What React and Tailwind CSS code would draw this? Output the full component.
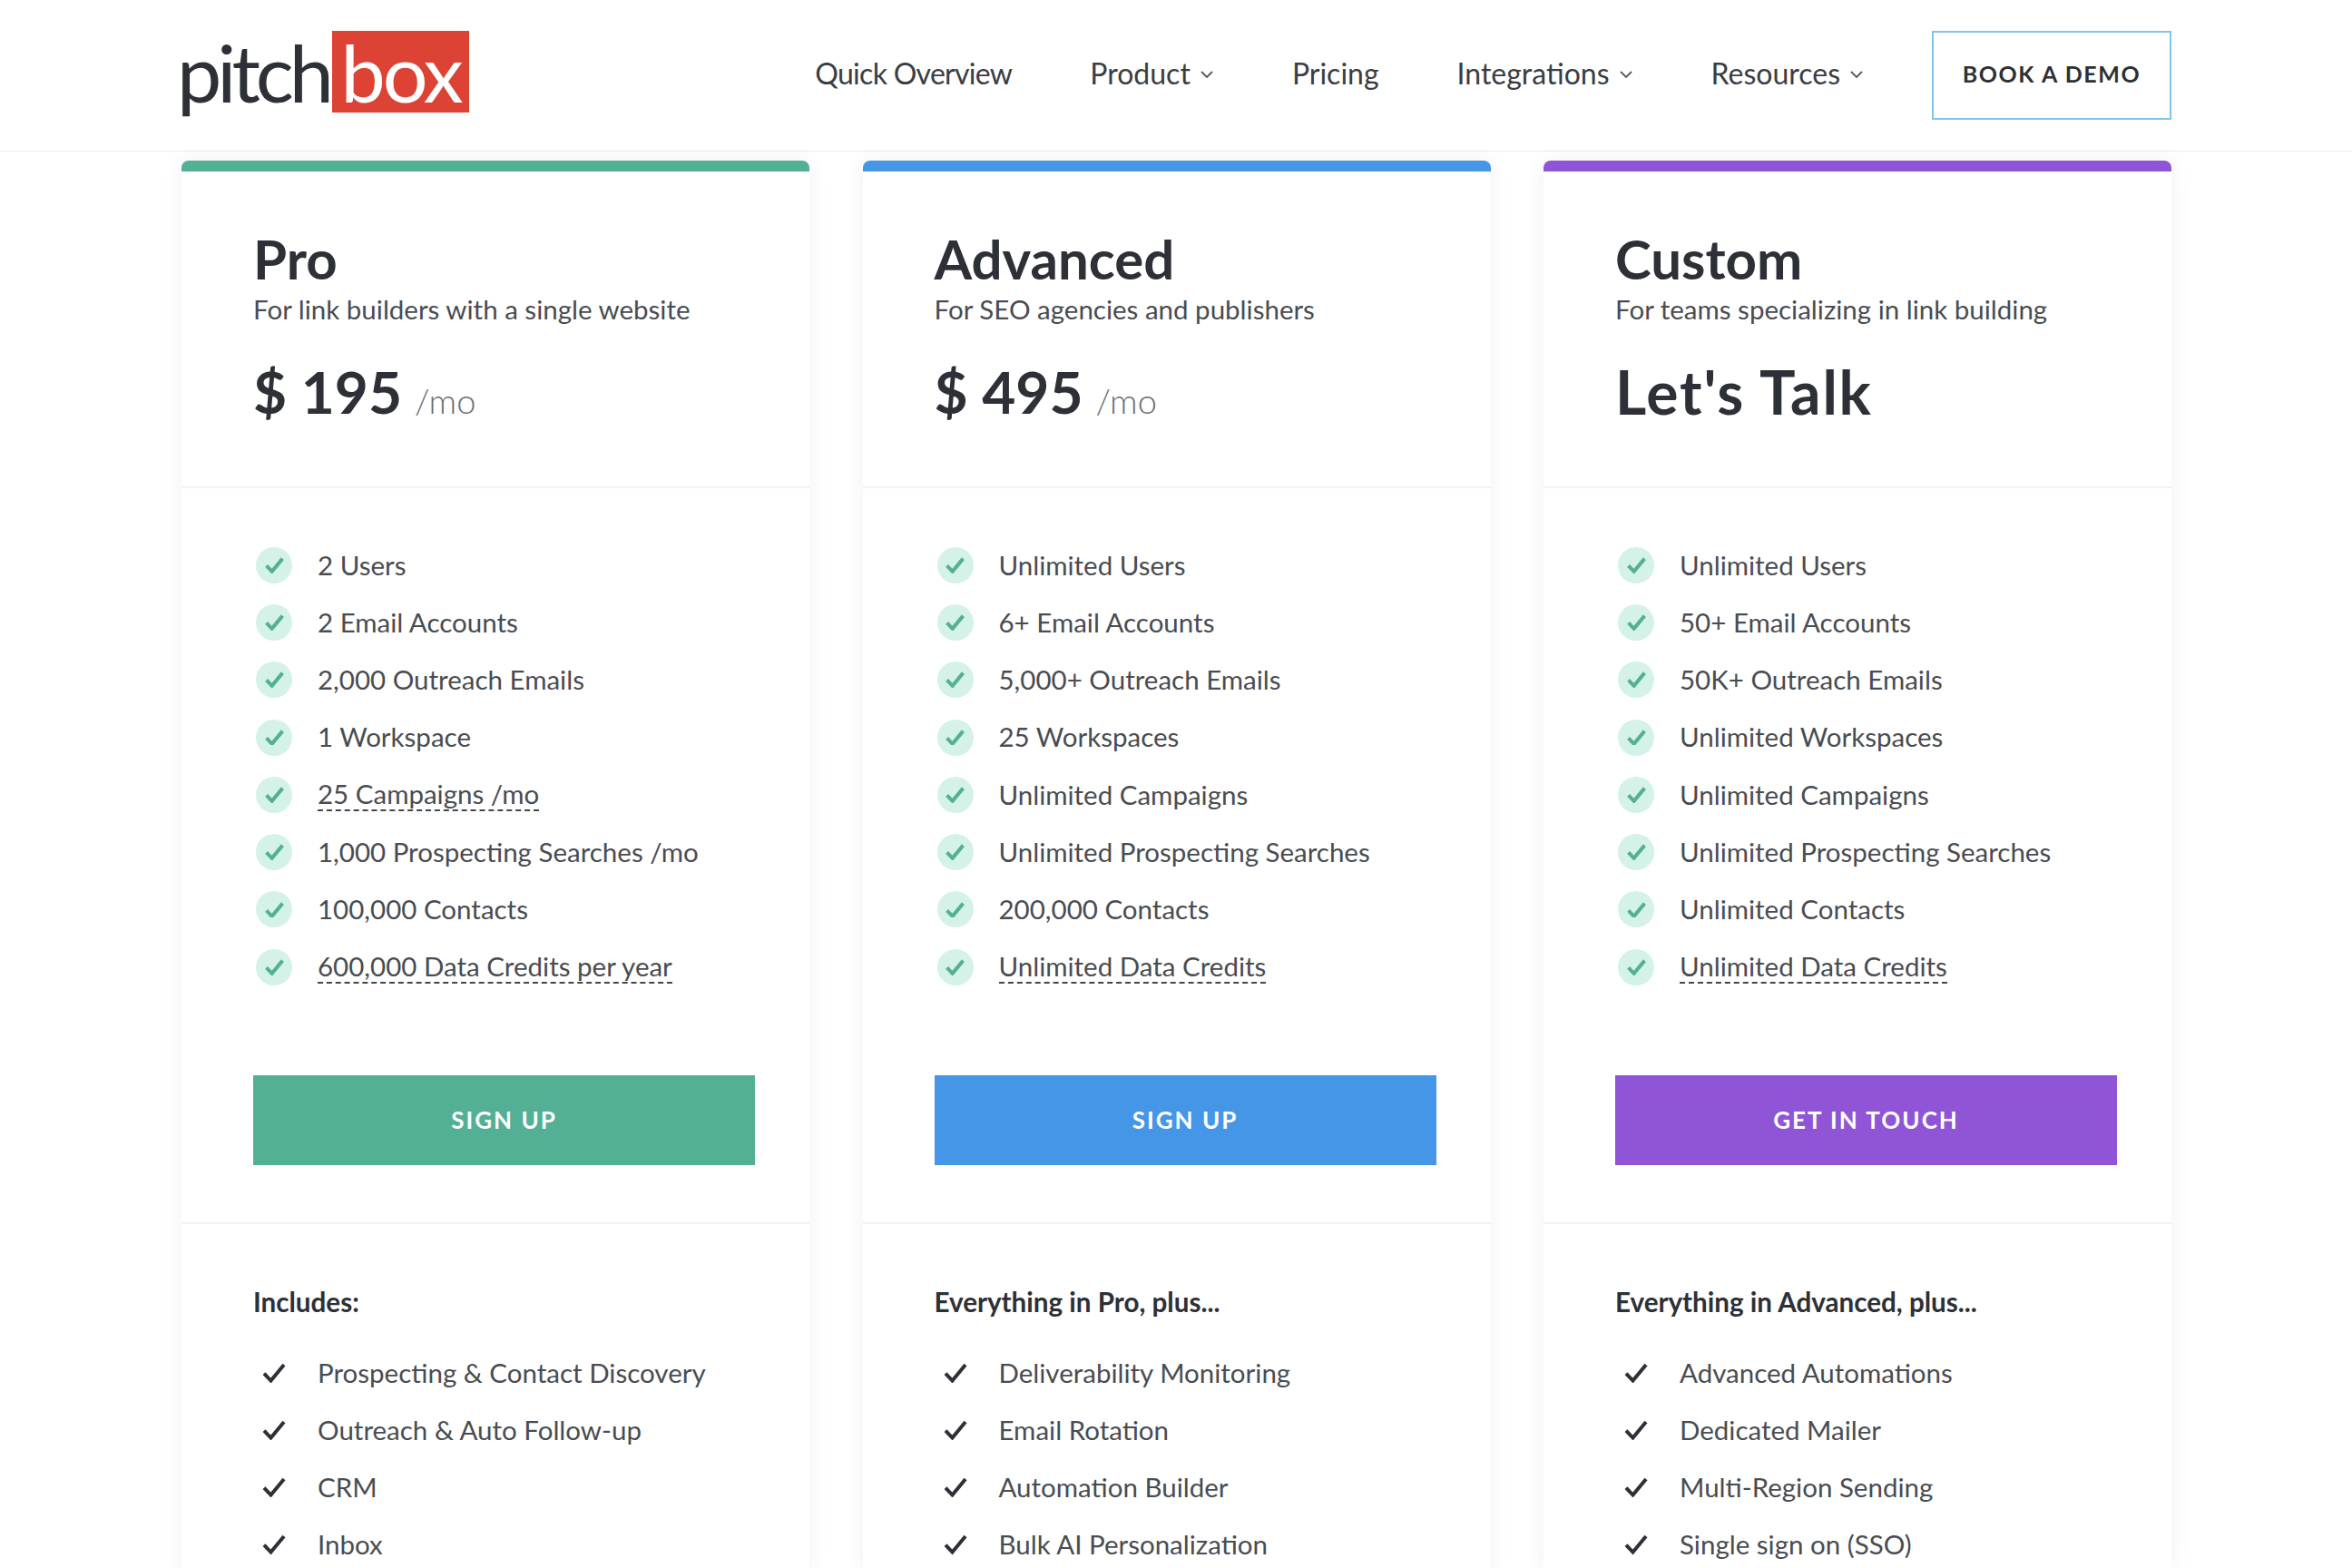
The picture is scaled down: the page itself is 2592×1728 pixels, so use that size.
const plans = [
  {
    name: "Pro",
    desc: "For link builders with a single website",
    price: "$ 195",
    priceStyle: "text-[64px]",
    per: "/mo",
    bar: "bg-[#53b094]",
    cta: "SIGN UP",
    features: [
      ["2 Users"],
      ["2 Email Accounts"],
      ["2,000 Outreach Emails"],
      ["1 Workspace"],
      ["25 Campaigns /mo", true],
      ["1,000 Prospecting Searches /mo"],
      ["100,000 Contacts"],
      ["600,000 Data Credits per year", true],
    ],
    heading: "Includes:",
    extras: ["Prospecting & Contact Discovery", "Outreach & Auto Follow-up", "CRM", "Inbox"],
  },
  {
    name: "Advanced",
    desc: "For SEO agencies and publishers",
    price: "$ 495",
    priceStyle: "text-[64px]",
    per: "/mo",
    bar: "bg-[#4596e6]",
    cta: "SIGN UP",
    features: [
      ["Unlimited Users"],
      ["6+ Email Accounts"],
      ["5,000+ Outreach Emails"],
      ["25 Workspaces"],
      ["Unlimited Campaigns"],
      ["Unlimited Prospecting Searches"],
      ["200,000 Contacts"],
      ["Unlimited Data Credits", true],
    ],
    heading: "Everything in Pro, plus...",
    extras: ["Deliverability Monitoring", "Email Rotation", "Automation Builder", "Bulk AI Personalization"],
  },
  {
    name: "Custom",
    desc: "For teams specializing in link building",
    price: "Let's Talk",
    priceStyle: "text-[66px] tracking-[1.8px]",
    bar: "bg-[#9055d6]",
    cta: "GET IN TOUCH",
    features: [
      ["Unlimited Users"],
      ["50+ Email Accounts"],
      ["50K+ Outreach Emails"],
      ["Unlimited Workspaces"],
      ["Unlimited Campaigns"],
      ["Unlimited Prospecting Searches"],
      ["Unlimited Contacts"],
      ["Unlimited Data Credits", true],
    ],
    heading: "Everything in Advanced, plus...",
    extras: ["Advanced Automations", "Dedicated Mailer", "Multi-Region Sending", "Single sign on (SSO)"],
  },
];

function Chevron() {
  return (
    <svg width="16" height="10" viewBox="0 0 16 10" fill="none" className="ml-[10px] mt-[2px]">
      <path d="M2 2l6 6 6-6" stroke="#55585d" strokeWidth="1.8" />
    </svg>
  );
}

function Check({ size = 26, stroke = "#2d3036", width = 4 }) {
  return (
    <svg width={size} height={size * 0.85} viewBox="0 0 26 22" fill="none">
      <path d="M2 11.5l7.5 8L24 2" stroke={stroke} strokeWidth={width} />
    </svg>
  );
}

function Header() {
  return (
    <header className="h-[167px] border-b border-[#ececec] bg-white">
      <div className="ml-[199px] flex h-full w-[2194px] items-center justify-between">
        <div className="mb-[8px] flex items-center">
          <span className="-ml-[4px] w-[171px] text-[88px] leading-none tracking-[-5px] text-[#2d3036]">pitch</span>
          <span className="flex h-[90px] w-[151px] items-center justify-center bg-[#dc4335] text-[88px] leading-none tracking-[-3px] text-white">
            box
          </span>
        </div>
        <nav className="flex items-center text-[32px] text-[#3a3d43]">
          <div className="mb-[4px] flex items-center gap-[86px]">
            <a className="tracking-[-0.7px]">Quick Overview</a>
            <a className="flex items-center">Product <Chevron /></a>
            <a>Pricing</a>
            <a className="flex items-center">Integrations <Chevron /></a>
            <a className="flex items-center">Resources <Chevron /></a>
          </div>
          <a className="ml-[75px] flex h-[98px] w-[264px] items-center justify-center border-2 border-[#7fc4ea] pb-[2px] text-[25px] font-bold tracking-[1.6px] text-[#2d3036]">
            BOOK A DEMO
          </a>
        </nav>
      </div>
    </header>
  );
}

function Card({ plan }) {
  return (
    <section className="w-[692px] rounded-t-[8px] bg-white shadow-[0_0_24px_rgba(0,0,0,0.06)]">
      <div className={`h-[12px] rounded-t-[8px] ${plan.bar}`} />
      <div className="h-[349px] border-b-2 border-[#f2f2f2] pl-[79px] pt-[60px]">
        <h2 className="text-[60px] leading-[72px] font-bold text-[#2d3036]">{plan.name}</h2>
        <p className="text-[29.5px] leading-[40px] text-[#494c52]">{plan.desc}</p>
        <div className="mt-[27px] flex items-baseline">
          <span className={`leading-[88px] font-bold text-[#2d3036] ${plan.priceStyle}`}>{plan.price}</span>
          {plan.per && <span className="ml-[14px] text-[38px] font-light text-[#6b6e73]">{plan.per}</span>}
        </div>
      </div>
      <div className="h-[811px] border-b-2 border-[#f2f2f2] pl-[79px] pr-[60px] pt-[53px]">
        <ul>
          {plan.features.map(([text, dashed]) => (
            <li key={text} className="flex h-[63.3px] items-center text-[29.5px] text-[#494c52]">
              <span className="ml-[3px] mr-[28px] flex size-[40px] items-center justify-center rounded-full bg-[#d4f2e7]">
                <Check size={21} stroke="#53b094" width={5} />
              </span>
              <span className={dashed ? "border-b-2 border-dashed border-[#43464c] leading-[35px]" : ""}>{text}</span>
            </li>
          ))}
        </ul>
        <a className={`mt-[88px] flex h-[99px] items-center justify-center text-[26px] font-bold tracking-[2px] text-white ${plan.bar}`}>
          {plan.cta}
        </a>
      </div>
      <div className="pl-[79px] pt-[66px]">
        <h3 className="text-[29.6px] leading-[40px] font-bold text-[#2d3036]">{plan.heading}</h3>
        <ul className="mt-[26px]">
          {plan.extras.map((text) => (
            <li key={text} className="flex h-[63.3px] items-center text-[29.5px] text-[#494c52]">
              <span className="ml-[10px] mr-[35px] flex w-[26px]">
                <Check />
              </span>
              {text}
            </li>
          ))}
        </ul>
      </div>
    </section>
  );
}

export default function App() {
  return (
    <div className="h-screen overflow-hidden bg-white font-['Lato',sans-serif]">
      <Header />
      <main className="ml-[200px] flex w-[2193px] justify-between pt-[10px]">
        {plans.map((plan) => (
          <Card key={plan.name} plan={plan} />
        ))}
      </main>
    </div>
  );
}
